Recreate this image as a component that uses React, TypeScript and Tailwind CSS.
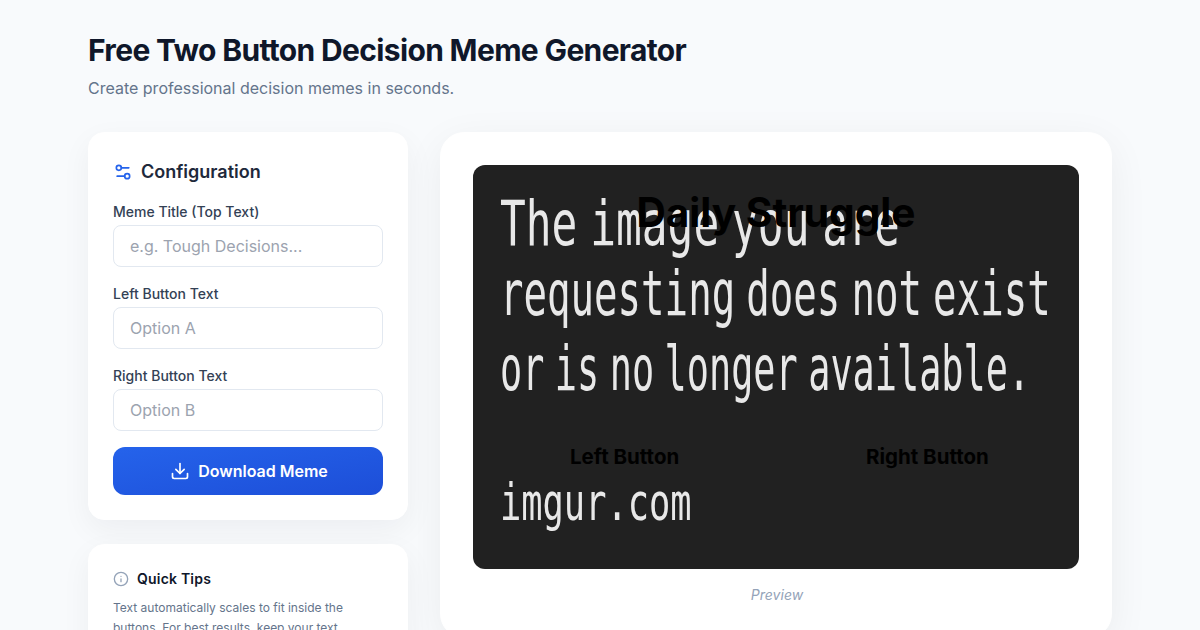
import { Download, Info, Settings2 } from 'lucide-react';

const fields = [
  { label: 'Meme Title (Top Text)', placeholder: 'e.g. Tough Decisions...' },
  { label: 'Left Button Text', placeholder: 'Option A' },
  { label: 'Right Button Text', placeholder: 'Option B' },
];

export default function App() {
  return (
    <div className="h-screen overflow-hidden bg-[#f8fafc] font-['Inter',sans-serif]">
      <div className="mx-auto w-[1024px] pt-[30px]">
        {/* Header */}
        <h1 className="text-3xl leading-[40px] font-bold tracking-[-0.65px] text-[#0f172a]">
          Free Two Button Decision Meme Generator
        </h1>
        <p className="mt-[6px] text-base leading-6 text-[#64748b]">Create professional decision memes in seconds.</p>

        <div className="mt-[32px] flex items-start gap-8">
          {/* Sidebar */}
          <div className="flex w-[320px] shrink-0 flex-col gap-6">
            <div className="rounded-2xl border border-white bg-white px-6 pt-[25px] pb-[24px] shadow-[0_10px_30px_rgba(15,23,42,0.05)]">
              <div className="mb-[15px] flex items-center gap-2 text-lg leading-7 font-semibold text-[#1e293b]">
                <Settings2 size={20} className="text-[#2563eb]" />
                Configuration
              </div>
              <div className="flex flex-col gap-[16px]">
                {fields.map((field) => (
                  <div key={field.label}>
                    <label className="mb-[3px] block text-sm leading-[21px] font-medium text-[#334155]">{field.label}</label>
                    <input
                      placeholder={field.placeholder}
                      className="h-[42px] w-full rounded-lg border border-[#e2e8f0] bg-white px-4 text-base placeholder:text-[#9ca3af]"
                    />
                  </div>
                ))}
                <button className="flex h-12 w-full items-center justify-center gap-2 rounded-xl bg-gradient-to-br from-[#2563eb] to-[#1d4ed8] pl-[2px] text-base font-semibold text-white">
                  <Download size={20} />
                  Download Meme
                </button>
              </div>
            </div>

            <div className="rounded-2xl border border-white bg-white px-6 pt-[24px] pb-6 shadow-[0_10px_30px_rgba(15,23,42,0.05)]">
              <div className="mb-[9px] flex items-center gap-2 text-sm leading-5 font-semibold tracking-[0.2px] text-[#0f172a]">
                <Info size={16} className="text-[#94a3b8]" />
                Quick Tips
              </div>
              <p className="text-xs leading-[19.5px] text-[#64748b]">
                Text automatically scales to fit inside the buttons. For best results, keep your text concise.
              </p>
            </div>
          </div>

          {/* Preview */}
          <div className="w-[672px] rounded-3xl border border-white bg-white p-8 shadow-[0_10px_40px_rgba(15,23,42,0.06)]">
            <div className="relative h-[404px] w-[606px] overflow-hidden rounded-xl bg-[#212121]">
              <div className="absolute top-[27px] left-[27px] origin-top-left scale-x-[0.68] font-['DejaVu_Sans_Mono',monospace] text-[63px] leading-none [word-spacing:-19px] whitespace-nowrap text-[#e8e8e8] blur-[0.7px]">
                The image you are
              </div>
              <div className="absolute top-[97px] left-[27px] origin-top-left scale-x-[0.62] font-['DejaVu_Sans_Mono',monospace] text-[63px] leading-none [word-spacing:-20px] whitespace-nowrap text-[#e8e8e8] blur-[0.7px]">
                requesting does not exist
              </div>
              <div className="absolute top-[172px] left-[27px] origin-top-left scale-x-[0.585] font-['DejaVu_Sans_Mono',monospace] text-[63px] leading-none [word-spacing:-20px] whitespace-nowrap text-[#e8e8e8] blur-[0.7px]">
                or is no longer available.
              </div>
              <div className="absolute top-[311px] left-[27px] origin-top-left scale-x-[0.68] font-['DejaVu_Sans_Mono',monospace] text-[52px] leading-none whitespace-nowrap text-[#e8e8e8] blur-[0.7px]">
                imgur.com
              </div>
              <div className="absolute top-[24px] right-0 left-0 text-center text-[40.6px] leading-[48px] font-bold text-black">
                Daily Struggle
              </div>
              <div className="absolute top-[278px] left-[97px] text-[20.5px] leading-7 font-bold text-black">Left Button</div>
              <div className="absolute top-[278px] left-[393px] text-[20.5px] leading-7 font-bold text-black">Right Button</div>
            </div>
            <p className="mt-4 pl-[2px] text-center text-sm leading-5 text-[#94a3b8] italic">Preview</p>
          </div>
        </div>
      </div>
    </div>
  );
}
